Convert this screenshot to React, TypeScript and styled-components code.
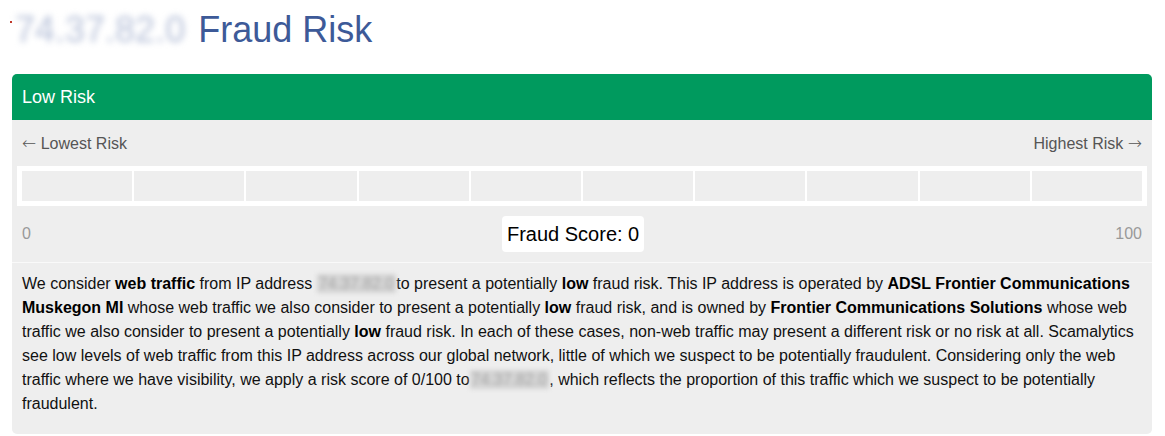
import styled, { createGlobalStyle } from 'styled-components'

const GlobalStyle = createGlobalStyle`
  body {
    margin: 0;
    background: #fff;
    font-family: "Liberation Sans", Arial, sans-serif;
  }
`

const Page = styled.div`
  padding: 0 13px 0 12px;
`

const Title = styled.h1`
  position: relative;
  margin: 0;
  padding-top: 9px;
  height: 74px;
  box-sizing: border-box;
  font-size: 36px;
  font-weight: normal;
  line-height: 41px;
  color: #3d5a98;
`

const Dot = styled.span`
  position: absolute;
  left: -2px;
  top: 21px;
  width: 2px;
  height: 2px;
  background: #c0392b;
`

const Blurred = styled.span<{ $size: string }>`
  display: inline-block;
  color: ${p => (p.$size === 'big' ? '#b6c0d8' : '#a8a8a8')};
  filter: blur(${p => (p.$size === 'big' ? '3px' : '2px')});
  padding: 0 ${p => (p.$size === 'big' ? '3px' : '2px')};
  line-height: ${p => (p.$size === 'big' ? 'inherit' : '19px')};
  background: ${p => (p.$size === 'big' ? 'transparent' : '#d4d4d4')};
`

const Card = styled.div`
  background: #eee;
  border-radius: 5px;
  overflow: hidden;
`

const Header = styled.div`
  background: #009a5e;
  color: #fff;
  font-size: 18px;
  line-height: 46px;
  height: 46px;
  padding: 0 10px;
`

const ScoreArea = styled.div`
  padding: 14px 0 10px;
  border-bottom: 1px solid #f9f9f9;
`

const LabelRow = styled.div<{ $muted?: boolean }>`
  display: flex;
  justify-content: space-between;
  align-items: center;
  padding: 0 10px;
  height: ${p => (p.$muted ? 'auto' : '18px')};
  font-size: 16px;
  color: ${p => (p.$muted ? '#999' : '#555')};
`

const Arrow = styled.span`
  font-family: "DejaVu Sans", sans-serif;
  font-size: 17px;
  font-weight: 300;
`

const Bar = styled.div`
  display: flex;
  gap: 2px;
  margin: 14px 5px 10px;
  border: 5px solid #fff;
  background: #fff;
  height: 30px;
`

const Segment = styled.div`
  flex: 1;
  background: #eee;
`

const ScoreBox = styled.div`
  background: #fff;
  color: #000;
  border-radius: 4px;
  font-size: 20px;
  line-height: 24px;
  padding: 6px 5px;
`

const Description = styled.p`
  margin: 0;
  padding: 9px 10px 18px;
  font-size: 16px;
  line-height: 24px;
  color: #111;

  b {
    color: #000;
  }
`

export default function App() {
  const ip = '74.37.82.0'
  return (
    <>
      <GlobalStyle />
      <Page>
        <Title>
          <Dot />
          <Blurred $size="big">{ip}</Blurred> Fraud Risk
        </Title>
        <Card>
          <Header>Low Risk</Header>
          <ScoreArea>
            <LabelRow>
              <span>
                <Arrow>←</Arrow> Lowest Risk
              </span>
              <span>
                Highest Risk <Arrow>→</Arrow>
              </span>
            </LabelRow>
            <Bar>
              {Array.from({ length: 10 }).map((_, i) => (
                <Segment key={i} />
              ))}
            </Bar>
            <LabelRow $muted>
              <span>0</span>
              <ScoreBox>Fraud Score: 0</ScoreBox>
              <span>100</span>
            </LabelRow>
          </ScoreArea>
          <Description>
            We consider <b>web traffic</b> from IP address <Blurred $size="small">{ip}</Blurred>to present a
            potentially <b>low</b> fraud risk. This IP address is operated by{' '}
            <b>ADSL Frontier Communications Muskegon MI</b> whose web traffic we also consider to present a
            potentially <b>low</b> fraud risk, and is owned by <b>Frontier Communications Solutions</b> whose web
            traffic we also consider to present a potentially <b>low</b> fraud risk. In each of these cases,
            non-web traffic may present a different risk or no risk at all. Scamalytics see low levels of web
            traffic from this IP address across our global network, little of which we suspect to be potentially
            fraudulent. Considering only the web traffic where we have visibility, we apply a risk score of 0/100
            to<Blurred $size="small">{ip}</Blurred>, which reflects the proportion of this traffic which we
            suspect to be potentially fraudulent.
          </Description>
        </Card>
      </Page>
    </>
  )
}
